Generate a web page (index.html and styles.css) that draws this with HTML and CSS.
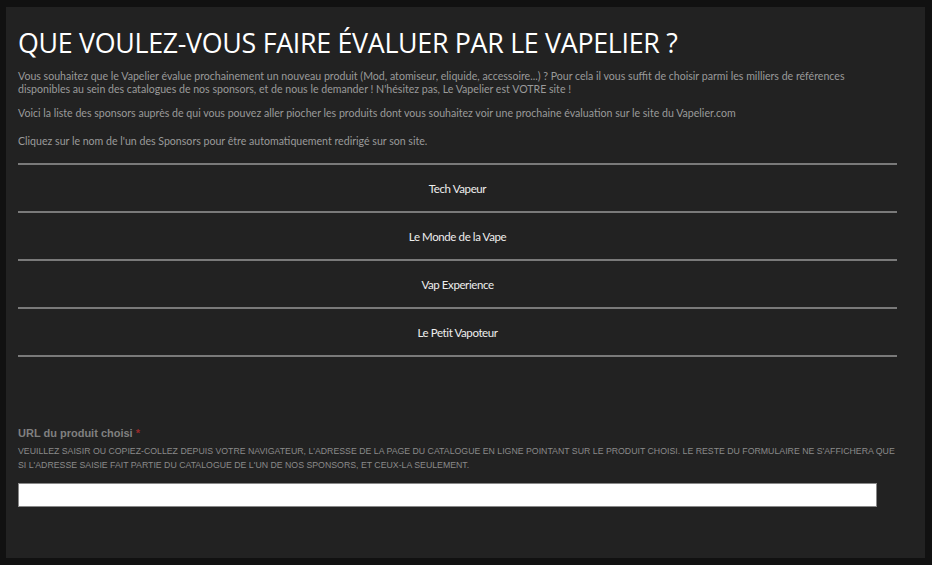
FILE: index.html
```html
<!DOCTYPE html>
<html lang="fr">
<head>
<meta charset="utf-8">
<link rel="stylesheet" href="styles.css">
</head>
<body>
<div class="panel">
  <h1 class="title">QUE VOULEZ-VOUS FAIRE ÉVALUER PAR LE VAPELIER ?</h1>
  <p class="intro">Vous souhaitez que le Vapelier évalue prochainement un nouveau produit (Mod, atomiseur, eliquide, accessoire...) ? Pour cela il vous suffit de choisir parmi les milliers de références disponibles au sein des catalogues de nos sponsors, et de nous le demander ! N'hésitez pas, Le Vapelier est VOTRE site !</p>
  <p class="intro intro-mid">Voici la liste des sponsors auprès de qui vous pouvez aller piocher les produits dont vous souhaitez voir une prochaine évaluation sur le site du Vapelier.com</p>
  <p class="intro intro-last">Cliquez sur le nom de l'un des Sponsors pour être automatiquement redirigé sur son site.</p>
  <ul class="sponsors">
    <li class="sponsor"><a href="#">Tech Vapeur</a></li>
    <li class="sponsor"><a href="#">Le Monde de la Vape</a></li>
    <li class="sponsor"><a href="#">Vap Experience</a></li>
    <li class="sponsor"><a href="#">Le Petit Vapoteur</a></li>
  </ul>
  <div class="field">
    <label class="field-label">URL du produit choisi <span class="req">*</span></label>
    <p class="field-help">VEUILLEZ SAISIR OU COPIEZ-COLLEZ DEPUIS VOTRE NAVIGATEUR, L'ADRESSE DE LA PAGE DU CATALOGUE EN LIGNE POINTANT SUR LE PRODUIT CHOISI. LE RESTE DU FORMULAIRE NE S'AFFICHERA QUE SI L'ADRESSE SAISIE FAIT PARTIE DU CATALOGUE DE L'UN DE NOS SPONSORS, ET CEUX-LA SEULEMENT.</p>
    <input class="field-input" type="text">
  </div>
</div>
</body>
</html>
```
FILE: styles.css
```css
html, body { margin: 0; padding: 0; }
body {
  background: #111111;
  padding: 7px 7px 7px 6px;
  font-family: "Open Sans", "Liberation Sans", sans-serif;
  height: 565px;
  box-sizing: border-box;
}
.panel {
  background: #222222;
  height: 551px;
  box-sizing: border-box;
  padding: 18px 28px 0 12px;
}
.title {
  margin: 0;
  font-weight: 400;
  font-size: 26.8px;
  line-height: 36px;
  color: #ffffff;
  letter-spacing: -0.3px;
}
.intro {
  margin: 9px 0 0 0;
  font-family: "Lato", "Open Sans", sans-serif;
  font-size: 10.6px;
  line-height: 13px;
  color: #9a9a9a;
}
.intro-mid { margin-top: 11px; }
.intro-last { margin-top: 15px; }
.sponsors {
  list-style: none;
  margin: 15px 0 0 0;
  padding: 0;
  border-top: 2px solid #7a7a7a;
}
.sponsor {
  height: 46px;
  border-bottom: 2px solid #7a7a7a;
  display: flex;
  align-items: center;
  justify-content: center;
}
.sponsor a {
  color: #eeeeee;
  text-decoration: none;
  font-family: "Lato", "Open Sans", sans-serif;
  font-size: 11.5px;
  letter-spacing: -0.4px;
}
.field { margin-top: 69px; }
.field-label {
  display: block;
  font-family: "Liberation Sans", Arial, sans-serif;
  font-weight: bold;
  font-size: 11px;
  color: #808080;
  line-height: 14px;
}
.req { color: #9a2a2a; }
.field-help {
  margin: 4px 0 0 0;
  font-family: "Liberation Sans", Arial, sans-serif;
  font-size: 8.75px;
  line-height: 14px;
  color: #8a8a8a;
}
.field-input {
  display: block;
  margin-top: 11px;
  width: 859px;
  height: 24px;
  box-sizing: border-box;
  border: 1px solid #888;
  background: #fff;
}
```
